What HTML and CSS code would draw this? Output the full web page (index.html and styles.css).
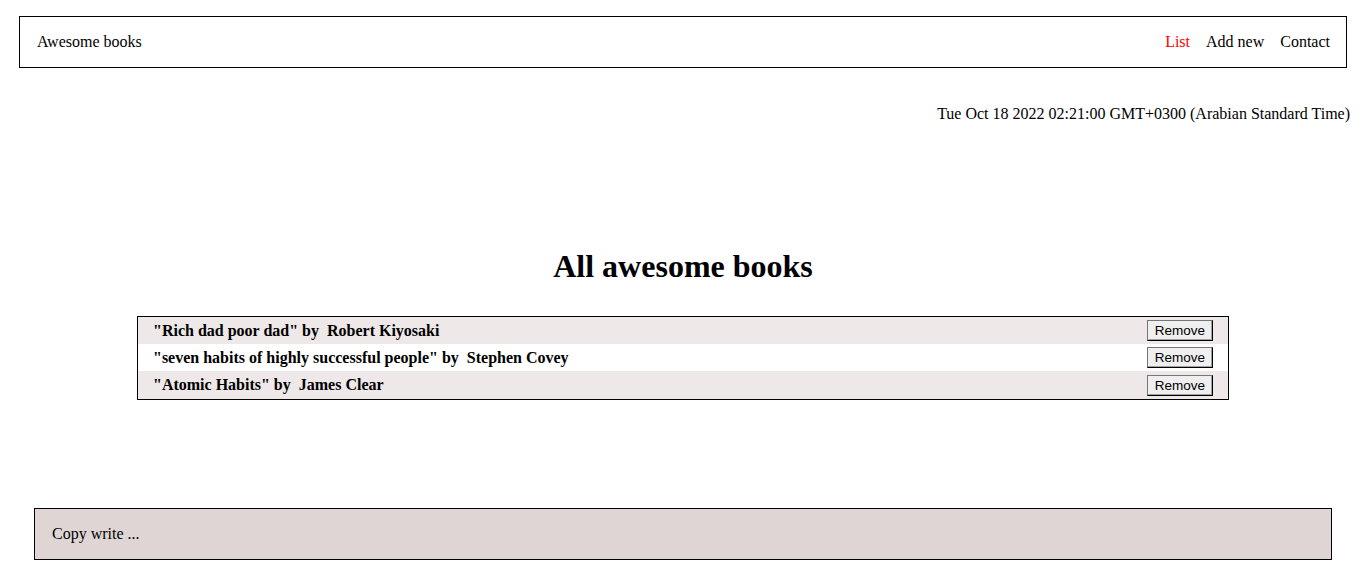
FILE: index.html
```html
<!DOCTYPE html>
<html>
<head>
<meta charset="utf-8">
<title>Awesome books</title>
<link rel="stylesheet" href="styles.css">
</head>
<body>
<header class="topbar">
  <span class="brand">Awesome books</span>
  <nav class="nav">
    <a class="nav-link active">List</a>
    <a class="nav-link">Add new</a>
    <a class="nav-link">Contact</a>
  </nav>
</header>
<p class="date">Tue Oct 18 2022 02:21:00 GMT+0300 (Arabian Standard Time)</p>
<main class="main">
  <h1 class="title">All awesome books</h1>
  <ul class="books">
    <li class="book"><span class="book-text">"Rich dad poor dad" by&nbsp; Robert Kiyosaki</span><button class="remove">Remove</button></li>
    <li class="book"><span class="book-text">"seven habits of highly successful people" by&nbsp; Stephen Covey</span><button class="remove">Remove</button></li>
    <li class="book"><span class="book-text">"Atomic Habits" by&nbsp; James Clear</span><button class="remove">Remove</button></li>
  </ul>
</main>
<footer class="footer">Copy write ...</footer>
</body>
</html>
```
FILE: styles.css
```css
html, body {
  margin: 0;
  padding: 0;
}
body {
  font-family: "Liberation Serif", "Times New Roman", serif;
  font-size: 16px;
  color: #000;
  background: #fff;
  padding: 16px 0 0;
}
.topbar {
  margin: 0 19px;
  height: 52px;
  box-sizing: border-box;
  border: 1px solid #000;
  display: flex;
  align-items: center;
  justify-content: space-between;
  padding: 0 16px 0 17px;
}
.nav {
  display: flex;
  gap: 16px;
}
.nav-link {
  color: #000;
  text-decoration: none;
}
.nav-link.active {
  color: #ff0000;
}
.date {
  margin: 37px 16px 0 0;
  text-align: right;
  line-height: 18px;
}
.main {
  display: flex;
  flex-direction: column;
  align-items: center;
}
.title {
  margin: 125px 0 0;
  font-size: 32px;
  line-height: 37px;
  font-weight: bold;
}
.books {
  list-style: none;
  margin: 31px 0 0;
  padding: 0;
  width: 1092px;
  box-sizing: border-box;
  border: 1px solid #000;
}
.book {
  display: flex;
  justify-content: space-between;
  align-items: center;
  height: 27px;
  padding: 0 15px 0 15px;
  font-weight: bold;
  background: #eee8e8;
}
.book:nth-child(2) {
  background: #fff;
}
.book:last-child {
  height: 28px;
}
.remove {
  font-family: "Liberation Sans", Arial, sans-serif;
  font-size: 13.5px;
  height: 21px;
  width: 66px;
  padding: 0;
  background: #efefef;
  border: 1px solid #767676;
  border-right-color: #000;
  border-bottom-color: #000;
  box-shadow: inset -1px -1px 0 #a0a0a0;
  color: #000;
}
.footer {
  margin: 108px 34px 0 34px;
  height: 52px;
  box-sizing: border-box;
  border: 1px solid #000;
  background: #dfd5d4;
  display: flex;
  align-items: center;
  padding-left: 17px;
}
```
